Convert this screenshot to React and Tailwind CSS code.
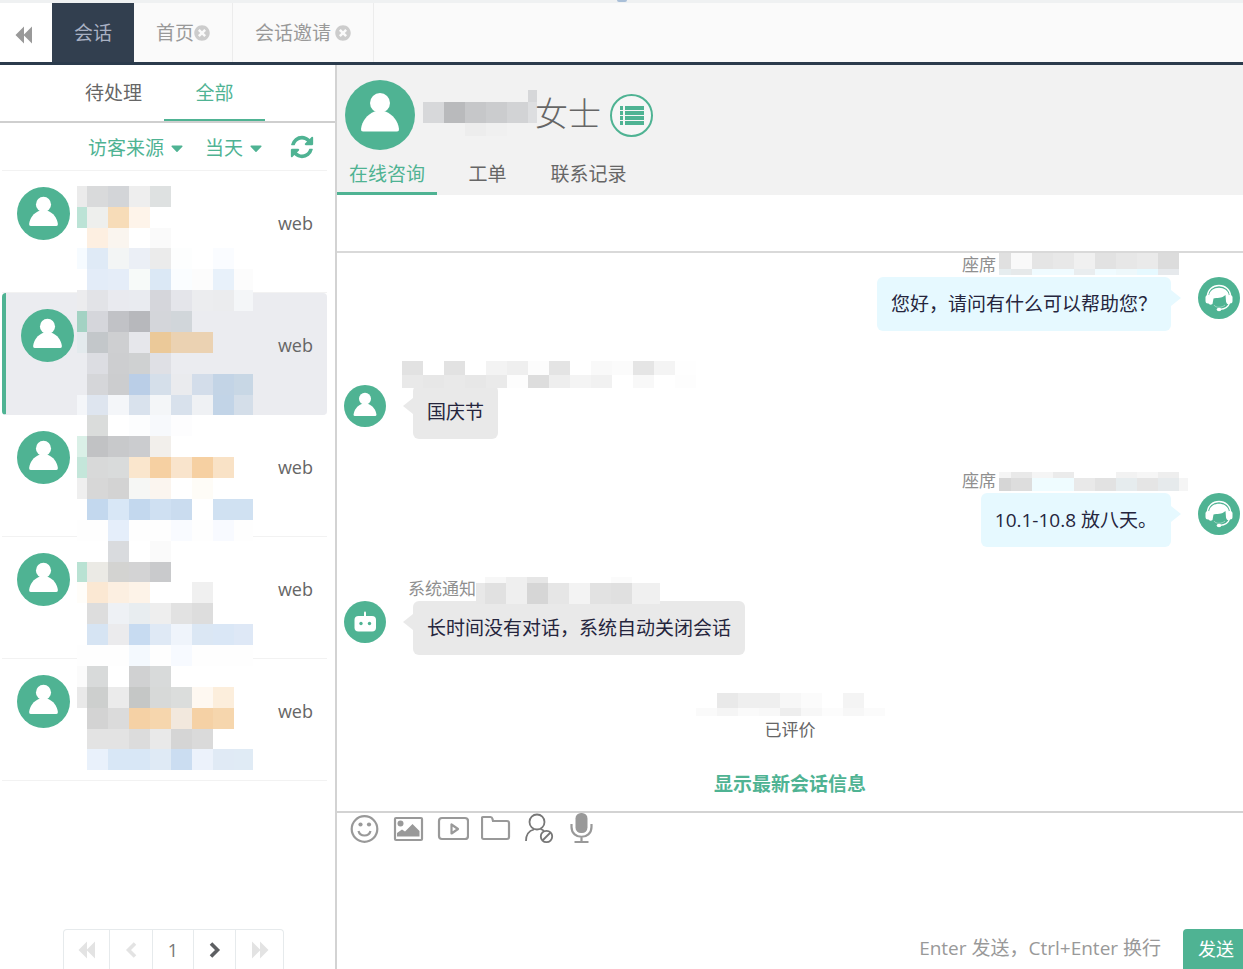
import React, { useState } from "react";
import { FaCaretDown, FaTimesCircle } from "react-icons/fa";

// Colours of the masked blocks, one array per row of cells
const listRows = [
  [21, ["#ebebeb", "#d9dadb", "#d3d5d8", "#eeeeee", "#dee1e1"]],
  [21, ["#bce3d6", "#eeefed", "#f7dcb8", "#fef4ea"]],
  [20, [null, "#fdefe1", "#faf5ef", null, "#fafafa"]],
  [21, ["#f6fbff", "#dfeaf6", "#f3f5f5", "#ebeff6", "#ebebeb", "#fdfefe", null, "#fafcff"]],
  [21, [null, "#e3ecf8", "#e5edf8", "#f7faf9", "#dbe8f5", "#fafdff", "#fcfcfc", "#e8f1fa", "#fcfcfc"]],
  [21, ["#ececee", "#e2e3e7", "#e9eaef", "#e9ebf0", "#d5d6db", "#e4e5ea", "#ecedef", "#ebecee", "#f4f6f8"]],
  [21, ["#a3d2c3", "#d5d6db", "#c1c2c6", "#b7b8bc", "#d4d6da", "#d1d6da"]],
  [21, ["#e3eaed", "#c3c7ca", "#cecfd1", "#e6e7eb", "#ebc999", "#ebd2b2", "#ebd2b2"]],
  [21, [null, "#dcdde2", "#cdced0", "#cfd1d2", "#dfe0e5"]],
  [21, [null, "#d5d6d9", "#cccdcf", "#bacee7", "#d5dfea", "#eaebee", "#d3ddea", "#c3d4e6", "#c8d7e5"]],
  [20, ["#f4f6f9", "#dee5ef", "#f4f6f9", "#d9e2ed", "#f4f6f8", "#d8e1ec", "#eff1f4", "#c2d4e7", "#d4dee9"]],
  [21, [null, "#dadcdb", null, "#fcfdfe", "#f7f9fc", "#fdfdfe"]],
  [21, ["#daf0e7", "#c1c2c4", "#c8c9cb", "#cbcccf", "#f2efeb"]],
  [21, ["#c4e6da", "#d8d9d9", "#d9dbdb", "#fae6cd", "#f6d0a2", "#f9e4cc", "#f6d0a2", "#f9e2c6"]],
  [21, ["#efefef", "#d7d7d7", "#d3d3d3", "#f6f7f5", "#fbf5ef", null, "#fefcf7"]],
  [21, [null, "#c3d8ee", "#d8e7f6", "#c3d8ee", "#cfe0f2", "#cadcef", null, "#d0e1f2", "#d0e1f2"]],
  [21, ["#fefefe", "#fefefe", "#e5eefa", "#fefefe", "#fefefe", "#f9fbff", "#fefefe", "#f8faff", "#fefefe"]],
  [21, [null, null, "#d9dbde", null, "#fafafa"]],
  [20, ["#b9e2d3", "#ebeae5", "#d3d3d1", "#d3d3d4", "#c9cacc"]],
  [21, ["#fffdf9", "#fbe8d3", "#fcefe1", "#fdf3e8", null, null, "#f0f0f0"]],
  [21, [null, "#dddddd", "#eef1f5", "#e8edf0", "#eeeeee", "#e2e2e2", "#dddddd"]],
  [21, [null, "#d6e4f3", "#ebebed", "#c7dbf1", "#dfe9f5", "#eff4fb", "#dbe7f4", "#dae7f6", "#dee8f6"]],
  [21, ["#fefefe", "#fefefe", "#fefefe", "#f4f9fe", "#fefefe", "#f7faff", "#fefefe", "#fefefe", "#fefefe"]],
  [21, ["#fbfbfb", "#d8dada", null, "#d0d1d2", "#d8dada"]],
  [21, ["#e9e9e9", "#cdcfce", "#ebebeb", "#c5c7c6", "#d7d9d8", "#dbdddc", "#fef8f1", "#fceedc"]],
  [21, [null, "#d3d3d3", "#dbdbdb", "#f5d1a5", "#f6d6ad", "#f2e8dd", "#f5d1a5", "#f6d6ad"]],
  [20, [null, "#e3e3e3", "#e3e3e3", "#dcdcdc", "#e9e9e9", "#d5d5d5", "#dadada"]],
  [21, [null, "#e9f1fb", "#d8e7f6", "#d8e7f6", "#dfeaf5", "#cbddf1", "#ecf2fb", "#e0eaf5", "#e0ebf5"]],
];

const nameRows = [
  [12, [null, null, null, null, null, "#d6d7d9"]],
  [21, ["#d7d8da", "#b9babc", "#c6c7c9", "#cbccce", "#d2d3d5", "#dddee0"]],
  [13, [null, null, "#ededed", "#f0f0f0"]],
];

const ratedRows = [
  [15, [null, "#e9e9e9", "#efefef", "#efefef", "#f7f7f7", "#fbfbfb", null, "#f4f4f4"]],
  [8, ["#fafafa", "#f5f5f5", "#fafafa", "#f8f8f8", "#eeeeee", "#f7f7f7", "#fcfcfc", "#f7f7f7", "#fbfbfb"]],
];

const messages = [
  {
    id: 1,
    side: "right",
    icon: "agent",
    author: "座席",
    text: "您好，请问有什么可以帮助您？",
    lead: 12,
    rows: [
      [16, ["#e0e0e0", "#f9f9f9", "#e5e5e5", "#e8e8e8", "#f0f0f0", "#e2e2e2", "#e7e7e7", "#eaeaea", "#dcdcdc"]],
      [6, ["#e6edef", "#e6e9ea", "#f0fbff", "#f0fbff", "#e9edef", "#f0fbff", "#eef8fb", "#e6f9ff", "#e6e9ec"]],
    ],
  },
  {
    id: 2,
    side: "left",
    icon: "user",
    author: "",
    text: "国庆节",
    lead: 21,
    rows: [
      [14, ["#e2e2e2", null, "#e2e2e2", null, "#f3f3f3", "#efefef", "#fcfcfc", "#e4e4e4", null, "#f9f9f9", "#fbfbfb", "#e5e5e5", "#f4f4f4", "#fefefe"]],
      [13, ["#e9e9e9", "#e7e7e7", "#e9e9e9", "#e7e7e7", "#eaeaea", "#fdfdfd", "#dddddd", "#eeeeee", "#f4f4f4", "#f1f1f1", null, "#f8f8f8", null, "#fdfdfd"]],
    ],
  },
  {
    id: 3,
    side: "right",
    icon: "agent",
    author: "座席",
    text: "10.1-10.8 放八天。",
    lead: 12,
    rows: [
      [3, []],
      [6, ["#f5f5f5", "#e9e9e9", "#f5f5f5", "#ebebeb", null, null, "#f2f2f2", "#f6f6f6", "#eeeeee"]],
      [13, ["#d6d6d6", "#dddddd", "#effcff", "#effcff", "#e9e9e9", "#e2e2e2", "#e6ecee", "#e5e5e5", "#e6eaec", "#f5f5f5"]],
    ],
  },
  {
    id: 4,
    side: "left",
    icon: "robot",
    author: "系统通知",
    text: "长时间没有对话，系统自动关闭会话",
    lead: 9,
    rows: [
      [6, [null, "#f7f7f7", "#efefef", "#e6e6e6", null, null, null, "#fbfbfb"]],
      [21, ["#e8e8e8", "#e1e1e1", "#efefef", "#d6d6d6", "#e6e6e6", "#f3f3f3", "#e2e2e2", "#e0e0e0", "#f0f0f0", "#f0f0f0"]],
    ],
  },
];

const visitors = [1, 2, 3, 4, 5];

function Mosaic({ rows, lead = 21, width, className = "" }) {
  const height = rows.reduce((sum, row) => sum + row[0], 0);
  let y = 0;

  return (
    <svg
      width={width}
      height={height}
      shapeRendering="crispEdges"
      aria-hidden="true"
      className={`shrink-0 pointer-events-none ${className}`}
    >
      {rows.map(([h, cells], r) => {
        const top = y;
        y += h;
        return cells.map((fill, c) =>
          fill ? (
            <rect
              key={`${r}-${c}`}
              x={c === 0 ? 0 : lead + (c - 1) * 21}
              y={top}
              width={c === 0 ? lead : 21}
              height={h}
              fill={fill}
            />
          ) : null
        );
      })}
    </svg>
  );
}

function DoubleArrow({ flip = false }) {
  return (
    <svg viewBox="0 0 18 18" fill="currentColor" aria-hidden="true" className="size-[18px]">
      <path d={flip ? "M1 .5 L9 8.500 V.5 L17.500 9 L9 17.500 V9.500 L1 17.500 Z" : "M17 .5 V17.500 L9 9.500 V17.500 L.5 9 L9 .5 V8.500 Z"} />
    </svg>
  );
}

function Chevron({ flip = false }) {
  return (
    <svg viewBox="0 0 16 18" fill="none" stroke="currentColor" strokeWidth="3.600" aria-hidden="true" className="w-4 h-[18px]">
      <path d={flip ? "M4 2.500 L10.500 9 L4 15.500" : "M12 2.500 L5.500 9 L12 15.500"} />
    </svg>
  );
}

function RefreshIcon() {
  return (
    <svg viewBox="0 0 1792 1792" fill="currentColor" aria-hidden="true" className="size-[26px]">
      <path d="M1639 1056q0 5-1 7-64 268-268 434.500t-478 166.500q-146 0-282.500-55t-243.500-157l-129 129q-19 19-45 19t-45-19-19-45v-448q0-26 19-45t45-19h448q26 0 45 19t19 45-19 45l-137 137q71 66 161 102t187 36q134 0 250-65t186-179q11-17 53-117 8-23 30-23h192q13 0 22.500 9.500t9.500 22.500zm25-800v448q0 26-19 45t-45 19h-448q-26 0-45-19t-19-45 19-45l138-138q-148-137-349-137-134 0-250 65t-186 179q-11 17-53 117-8 23-30 23h-199q-13 0-22.500-9.500t-9.500-22.500v-7q65-268 270-434.500t480-166.500q146 0 284 55.500t245 156.500l130-129q19-19 45-19t45 19 19 45z" />
    </svg>
  );
}

function UserAvatar({ className }) {
  return (
    <svg viewBox="0 0 70 70" aria-hidden="true" className={className}>
      <circle cx="35" cy="35" r="35" fill="#4fb393" />
      <circle cx="35" cy="23" r="10" fill="#fff" />
      <path
        d="M29.500 31.500 H40.500 C48 34.500 53 41 54 49 Q54.200 51.500 52 51.500 H18 Q15.800 51.500 16 49 C17 41 22 34.500 29.500 31.500 Z"
        fill="#fff"
      />
    </svg>
  );
}

function AgentAvatar({ className }) {
  return (
    <svg viewBox="0 0 42 42" aria-hidden="true" className={className}>
      <circle cx="21" cy="21" r="21" fill="#4fb393" />
      <path d="M9.500 19 A11.500 10.500 0 0 1 32.500 19" fill="none" stroke="#fff" strokeWidth="1.400" />
      <path
        d="M11 19 C11.500 13.500 16 10.800 21 10.800 S30.500 13.500 31 19 L31.500 27 C29.500 28 28.500 26.500 28 24.500 L27.500 18 C24 21.500 18.500 20.500 15.500 21.500 L14.500 27 C12.500 28.500 11 27.500 10.500 26 Z"
        fill="#fff"
      />
      <rect x="7.500" y="18" width="5.500" height="8.500" rx="2.500" fill="#fff" />
      <rect x="29" y="18" width="5.500" height="8.500" rx="2.500" fill="#fff" />
      <path d="M31.500 26 C30.500 29.500 27 32 22 32.300" fill="none" stroke="#fff" strokeWidth="1.200" />
      <ellipse cx="21" cy="32.500" rx="2.300" ry="1.700" fill="#fff" />
      <path d="M16 28 C17.500 31 24 31 27 28" fill="none" stroke="#a9dac9" strokeWidth="0.800" />
    </svg>
  );
}

function RobotAvatar({ className }) {
  return (
    <svg viewBox="0 0 42 42" aria-hidden="true" className={className}>
      <circle cx="21" cy="21" r="21" fill="#4fb393" />
      <rect x="20" y="10.500" width="2" height="6" rx="1" fill="#fff" />
      <rect x="10.500" y="15" width="21.500" height="15.500" rx="4" fill="#fff" />
      <circle cx="17" cy="22.500" r="1.700" fill="#4fb393" />
      <circle cx="25.500" cy="22.500" r="1.700" fill="#4fb393" />
    </svg>
  );
}

function Avatar({ type, className }) {
  if (type === "agent") return <AgentAvatar className={className} />;
  if (type === "robot") return <RobotAvatar className={className} />;
  return <UserAvatar className={className} />;
}

function Message({ message }) {
  const isRight = message.side === "right";

  return (
    <li
      className={`flex pb-[30px] ${isRight ? "flex-row-reverse gap-[10px] pr-[3px]" : "gap-4 pl-[7px]"}`}
    >
      <Avatar type={message.icon} className="size-[42px] mt-6 shrink-0" />
      <div className={`flex flex-col ${isRight ? "items-end" : "items-start"}`}>
        <div className="h-6 flex items-start relative z-10 text-[17px] leading-6 text-[#8f8f8f]">
          {message.author && (
            <span className={isRight ? "pr-[3px]" : "pl-[6px]"}>{message.author}</span>
          )}
          <Mosaic
            rows={message.rows}
            lead={message.lead}
            width={isRight ? 189 : message.author ? 184 : 294}
          />
        </div>
        <div
          className={`relative rounded-md px-[14px] py-[15px] text-[19px] leading-6 text-[#25253d] ${
            isRight ? "mr-[17px] bg-[#e6f9ff]" : "ml-[11px] bg-[#e9e9e9]"
          }`}
        >
          {message.text}
          <svg
            viewBox="0 0 10 16"
            aria-hidden="true"
            className={`absolute top-[13px] w-[10px] h-4 ${
              isRight ? "left-full text-[#e6f9ff]" : "right-full text-[#e9e9e9]"
            }`}
          >
            <path d={isRight ? "M0 0 L10 8 L0 16 Z" : "M10 0 L0 8 L10 16 Z"} fill="currentColor" />
          </svg>
        </div>
      </div>
    </li>
  );
}

function FilterSelect({ label, value }) {
  return (
    <label className="flex items-center gap-[6px] text-[#4fb393]">
      <span className="sr-only">{label}</span>
      <select className="appearance-none bg-transparent text-[19px] leading-8 font-['Noto_Sans_CJK_SC',sans-serif] outline-none">
        <option>{value}</option>
      </select>
      <FaCaretDown className="w-3 h-5 mt-[2px]" preserveAspectRatio="none" />
    </label>
  );
}

function ToolButton({ label, children }) {
  return (
    <button type="button" aria-label={label} className="size-8">
      <svg viewBox="0 0 32 32" fill="none" stroke="#999" strokeWidth="2.200" className="size-8">
        {children}
      </svg>
    </button>
  );
}

function App() {
  const [draft, setDraft] = useState("");
  const [selected, setSelected] = useState(2);

  return (
    <div className="h-screen flex flex-col overflow-hidden bg-white text-[#666] text-[19px] leading-7 font-['Open_Sans','Noto_Sans_CJK_SC',sans-serif]">
      <div className="h-[3px] shrink-0 flex justify-center bg-[#eff1f2]">
        <span className="w-[10px] h-[2px] rounded-b-sm bg-[#a9bfd8]" />
      </div>

      {/* Page tabs */}
      <nav className="flex h-[62px] shrink-0 bg-[#fafafa] border-b-3 border-[#2b3b4c] text-[#999]">
        <button type="button" aria-label="收起" className="w-[52px] pt-1 pr-1 bg-white flex items-center justify-center">
          <DoubleArrow />
        </button>
        <button type="button" className="px-[22px] bg-[#323f4f] text-[#a9b1c3]">
          会话
        </button>
        <div className="flex items-center px-[22px] border-r border-[#ececec]">
          <button type="button">首页</button>
          <button type="button" aria-label="关闭首页" className="text-[#ccc]">
            <FaTimesCircle className="size-4" />
          </button>
        </div>
        <div className="flex items-center gap-1 px-[22px] border-r border-[#ececec]">
          <button type="button">会话邀请</button>
          <button type="button" aria-label="关闭会话邀请" className="text-[#ccc]">
            <FaTimesCircle className="size-4" />
          </button>
        </div>
      </nav>

      <div className="flex flex-1 min-h-0">
        {/* Visitor list */}
        <aside className="w-[337px] shrink-0 flex flex-col border-r-2 border-[#d3d3d3]">
          <div className="flex h-[58px] shrink-0 pl-[63px] border-b-2 border-[#cfcfcf]">
            <button type="button" className="w-[101px]">
              待处理
            </button>
            <button type="button" className="w-[101px] pt-[2px] border-b-2 border-[#4fb393] text-[#4fb393]">
              全部
            </button>
          </div>

          <div className="flex items-center h-12 shrink-0 pl-[86px] pr-[12px] ml-[2px] mr-[8px] border-b border-[#f2f2f2]">
            <FilterSelect label="访客来源" value="访客来源" />
            <div className="ml-[22px]">
              <FilterSelect label="时间" value="当天" />
            </div>
            <button type="button" aria-label="刷新" className="ml-auto text-[#4fb393]">
              <RefreshIcon />
            </button>
          </div>

          <div className="relative flex-1 min-h-0">
            <ul className="ml-[2px] mr-[8px]">
              {visitors.map((id) => (
                <li key={id}>
                  <button
                    type="button"
                    onClick={() => setSelected(id)}
                    className={`w-full h-[122px] flex items-start justify-between pt-[16px] pl-[15px] pr-[14px] border-b ${
                      id === selected
                        ? "rounded-sm border-l-4 border-l-[#4fb393] border-b-[#ebecf0] bg-[#ebecf0]"
                        : "border-[#f2f2f2]"
                    }`}
                  >
                    <UserAvatar className="size-[53px]" />
                    <span className="pt-[22px] text-[18px] leading-7">web</span>
                  </button>
                </li>
              ))}
            </ul>
            <Mosaic rows={listRows} lead={10} width={176} className="absolute left-[77px] top-[15px]" />
          </div>

          <div className="flex h-10 shrink-0 ml-[63px] self-start border border-b-0 border-[#e6eaec] rounded-t-sm divide-x divide-[#e6eaec] text-[#e3e3e3]">
            <button type="button" aria-label="首页" className="w-[46px] flex items-center justify-center">
              <DoubleArrow />
            </button>
            <button type="button" aria-label="上一页" className="w-[43px] flex items-center justify-center">
              <Chevron />
            </button>
            <button type="button" className="w-[41px] text-[18px] text-[#777]">
              1
            </button>
            <button type="button" aria-label="下一页" className="w-[42px] flex items-center justify-center text-[#5d5f62]">
              <Chevron flip />
            </button>
            <button type="button" aria-label="末页" className="w-[47px] flex items-center justify-center">
              <DoubleArrow flip />
            </button>
          </div>
        </aside>

        {/* Conversation */}
        <main className="flex-1 min-w-0 flex flex-col">
          <header className="shrink-0 h-[130px] flex flex-col justify-between bg-[#f2f2f2]">
            <div className="flex items-center h-[70px] mt-[15px] pl-2">
              <UserAvatar className="size-[70px]" />
              <Mosaic rows={nameRows} width={114} className="ml-2 mb-1" />
              <h1 className="-ml-[2px] pb-[2px] text-[33px] leading-10 font-light">女士</h1>
              <button
                type="button"
                aria-label="详细信息"
                className="ml-[9px] size-[43px] rounded-full border-2 border-[#4fb393] bg-[#f6f6f6] flex items-center justify-center"
              >
                <svg viewBox="0 0 24 20" className="w-6 h-5" fill="#4fb393">
                  <path d="M0 1h3v4H0zM5 1h19v4H5zM0 6h3v4H0zM5 6h19v4H5zM0 11h3v4H0zM5 11h19v4H5zM0 16h3v4H0zM5 16h19v4H5z" />
                </svg>
              </button>
            </div>
            <div className="flex h-[43px]">
              <button type="button" className="w-[100px] pt-1 border-b-3 border-[#4fb393] text-[#4fb393]">
                在线咨询
              </button>
              <button type="button" className="w-[101px] pt-1 border-b-3 border-transparent">
                工单
              </button>
              <button type="button" className="w-[101px] pt-1 border-b-3 border-transparent">
                联系记录
              </button>
            </div>
          </header>

          <div className="h-[58px] shrink-0 border-b-2 border-[#d9d9d9]" />

          <section className="flex-1 min-h-0 overflow-hidden">
            <ul>
              {messages.map((message) => (
                <Message key={message.id} message={message} />
              ))}
            </ul>
            <div className="flex flex-col items-center pt-2">
              <Mosaic rows={ratedRows} width={189} />
              <p className="text-[17px] leading-7">已评价</p>
              <a href="#latest" className="mt-[26px] font-bold text-[#4fb393]">
                显示最新会话信息
              </a>
            </div>
          </section>

          {/* Editor */}
          <footer className="h-[158px] shrink-0 flex flex-col border-t-2 border-[#d3d3d3]">
            <div className="flex gap-3 pl-3">
              <ToolButton label="表情">
                <circle cx="15.500" cy="16" r="12.800" />
                <circle cx="11.500" cy="11.500" r="2.100" fill="#999" stroke="none" />
                <circle cx="20" cy="11.500" r="2.100" fill="#999" stroke="none" />
                <path d="M9.500 18 C11 24 20 24 21.500 18" />
              </ToolButton>
              <ToolButton label="图片">
                <rect x="2" y="5" width="27" height="22" rx="1" />
                <circle cx="7.500" cy="10.500" r="3" fill="#999" stroke="none" />
                <path d="M4 23.500 V20 L9 16.500 L12 18.500 L19.500 11 L26.500 18 V23.500 Z" fill="#999" stroke="none" />
              </ToolButton>
              <ToolButton label="视频">
                <rect x="2" y="5" width="29" height="21" rx="3" />
                <path d="M14.500 11.500 V20.500 L21 16 Z" strokeLinejoin="round" />
              </ToolButton>
              <ToolButton label="文件">
                <path d="M1 24 V5 Q1 4 2 4 H9.500 Q11 4 11.500 6 L12 8 H26 Q28 8 28 10 V24 Q28 26 26 26 H2.500 Q1 26 1 24 Z" />
              </ToolButton>
              <ToolButton label="拉黑">
                <g stroke="#777" strokeWidth="1.800">
                  <circle cx="12" cy="9" r="7.500" />
                  <path d="M1 28 C1 21 5 17.500 9 16.500 M15.500 16 C17 16.500 18 17 19 18" />
                  <circle cx="21.500" cy="23.500" r="5.700" />
                  <path d="M17.500 27.500 L25.500 19.500" />
                </g>
              </ToolButton>
              <ToolButton label="语音">
                <rect x="6.500" y="0" width="12" height="20" rx="5.500" fill="#999" stroke="none" />
                <path d="M2.500 11 V14 C2.500 27 22.500 27 22.500 14 V11 M12.500 24 V29 M5.500 29 H19.500" />
              </ToolButton>
            </div>
            <textarea
              aria-label="消息内容"
              value={draft}
              onChange={(e) => setDraft(e.target.value)}
              className="flex-1 min-h-0 resize-none outline-none px-3"
            />
            <div className="flex justify-end items-center gap-[22px] h-10 shrink-0">
              <span className="pb-[2px] text-[#999]">Enter 发送，Ctrl+Enter 换行</span>
              <button type="button" className="w-[60px] h-10 pl-[6px] rounded-tl bg-[#4fb393] text-white text-[18px]">
                发送
              </button>
            </div>
          </footer>
        </main>
      </div>
    </div>
  );
}

export default App;
